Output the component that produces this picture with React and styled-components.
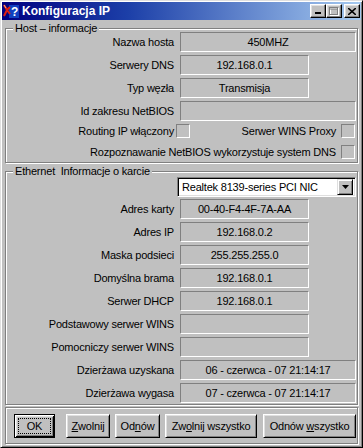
import React from 'react';
import styled, { createGlobalStyle } from 'styled-components';

const GlobalStyle = createGlobalStyle`
  html, body {
    margin: 0;
    padding: 0;
    background: #c0c0c0;
  }
  * {
    box-sizing: border-box;
  }
`;

// Outer window frame (raised)
const Window = styled.div`
  width: 363px;
  height: 448px;
  display: flex;
  flex-direction: column;
  padding: 1px;
  background: #c0c0c0;
  border: 1px solid;
  border-color: #dfdfdf #000 #000 #dfdfdf;
  box-shadow: inset 1px 1px 0 #fff, inset -1px -1px 0 #808080;
  font-family: 'Liberation Sans', Arial, sans-serif;
  font-size: 11px;
  letter-spacing: -0.2px;
  color: #000;
`;

const TitleBar = styled.div`
  height: 18px;
  flex-shrink: 0;
  display: flex;
  align-items: center;
  padding: 0 1px 0 1px;
  background: linear-gradient(90deg, #000080 0%, #1c3fa8 35%, #a6caf0 100%);
`;

const TitleIcon = styled.svg`
  flex-shrink: 0;
  margin-right: 3px;
`;

const TitleText = styled.div`
  flex: 1;
  color: #fff;
  font-weight: bold;
  font-size: 12px;
  letter-spacing: 0;
`;

const CaptionButton = styled.div`
  width: 16px;
  height: 14px;
  display: flex;
  align-items: center;
  justify-content: center;
  margin-left: ${({ $gap }) => $gap || 0}px;
  background: #c0c0c0;
  border: 1px solid;
  border-color: #fff #000 #000 #fff;
  box-shadow: inset -1px -1px 0 #808080, inset 1px 1px 0 #dfdfdf;
`;

const Body = styled.div`
  flex: 1;
  display: flex;
  flex-direction: column;
  padding: 0 3px;
`;

// Etched group box
const Group = styled.div`
  position: relative;
  display: flex;
  flex-direction: column;
  gap: 3px;
  margin-top: ${({ $mt }) => $mt}px;
  padding: ${({ $pt }) => $pt}px 1px 1px 1px;
  border: 1px solid #808080;
  box-shadow: inset 1px 1px 0 #fff, 1px 1px 0 #fff;
`;

const Legend = styled.div`
  position: absolute;
  top: -7px;
  left: 7px;
  padding: 0 2px;
  line-height: 13px;
  background: #c0c0c0;
  white-space: pre;
`;

const Row = styled.div`
  display: flex;
  align-items: center;
  height: ${({ $h }) => $h || 20}px;
  margin-top: ${({ $mt }) => $mt || 0}px;
  margin-bottom: ${({ $mb }) => $mb || 0}px;
`;

const Label = styled.div`
  width: ${({ $w }) => ($w ? `${$w}px` : 'auto')};
  flex: ${({ $w }) => ($w ? '0 0 auto' : '1')};
  text-align: right;
  white-space: nowrap;
`;

const Field = styled.div`
  width: ${({ $wide }) => ($wide ? 176 : 129)}px;
  height: 20px;
  margin-left: 6px;
  display: flex;
  align-items: center;
  justify-content: center;
  border: 1px solid;
  border-color: #808080 #fff #fff #808080;
  white-space: nowrap;
`;

const Check = styled.div`
  width: 14px;
  height: 14px;
  margin-left: ${({ $ml }) => $ml}px;
  margin-right: ${({ $mr }) => $mr || 0}px;
  border: 1px solid;
  border-color: #808080 #fff #fff #808080;
  flex-shrink: 0;
`;

const Combo = styled.div`
  width: 179px;
  height: 20px;
  margin-left: 170px;
  display: flex;
  align-items: center;
  padding: 2px;
  background: #fff;
  border: 1px solid;
  border-color: #808080 #fff #fff #808080;
  box-shadow: inset 1px 1px 0 #000, inset -1px -1px 0 #dfdfdf;
`;

const ComboText = styled.div`
  flex: 1;
  padding-left: 2px;
  white-space: nowrap;
`;

const ComboButton = styled.div`
  width: 16px;
  height: 16px;
  display: flex;
  align-items: center;
  justify-content: center;
  background: #c0c0c0;
  border: 1px solid;
  border-color: #dfdfdf #000 #000 #dfdfdf;
  box-shadow: inset 1px 1px 0 #fff, inset -1px -1px 0 #808080;
`;

const ButtonFrame = styled.div`
  display: flex;
  align-items: center;
  margin-top: 2px;
  height: 37px;
  padding: 0 0 0 8px;
  border: 1px solid #808080;
  box-shadow: inset 1px 1px 0 #fff, 1px 1px 0 #fff;
`;

const Button = styled.div`
  width: ${({ $w }) => $w}px;
  height: 24px;
  margin-left: ${({ $ml }) => $ml || 0}px;
  display: flex;
  align-items: center;
  justify-content: center;
  padding: 3px;
  background: #c0c0c0;
  border: 1px solid;
  border-color: ${({ $default }) => ($default ? '#000' : '#fff #000 #000 #fff')};
  box-shadow: ${({ $default }) =>
    $default
      ? 'inset 1px 1px 0 #fff, inset -1px -1px 0 #000, inset 2px 2px 0 #dfdfdf, inset -2px -2px 0 #808080'
      : 'inset 1px 1px 0 #dfdfdf, inset -1px -1px 0 #808080'};
  white-space: nowrap;
`;

const FocusRing = styled.span`
  flex: 1;
  align-self: stretch;
  display: flex;
  align-items: center;
  justify-content: center;
  border: 1px dotted #000;
`;

const hostRows = [
  { label: 'Nazwa hosta', value: '450MHZ', wide: true },
  { label: 'Serwery DNS', value: '192.168.0.1' },
  { label: 'Typ węzła', value: 'Transmisja' },
  { label: 'Id zakresu NetBIOS', value: '', wide: true },
];

const adapterRows = [
  { label: 'Adres karty', value: '00-40-F4-4F-7A-AA' },
  { label: 'Adres IP', value: '192.168.0.2' },
  { label: 'Maska podsieci', value: '255.255.255.0' },
  { label: 'Domyślna brama', value: '192.168.0.1' },
  { label: 'Serwer DHCP', value: '192.168.0.1' },
  { label: 'Podstawowy serwer WINS', value: '' },
  { label: 'Pomocniczy serwer WINS', value: '' },
  { label: 'Dzierżawa uzyskana', value: '06 - czerwca - 07 21:14:17', wide: true },
  { label: 'Dzierżawa wygasa', value: '07 - czerwca - 07 21:14:17', wide: true },
];

function FieldRow({ label, value, wide }) {
  return (
    <Row>
      <Label $w={167}>{label}</Label>
      <Field $wide={wide}>{value}</Field>
    </Row>
  );
}

export default function App() {
  return (
    <>
      <GlobalStyle />
      <Window>
        <TitleBar>
          <TitleIcon width="16" height="16" viewBox="0 0 16 16">
            <rect x="6" y="2" width="10" height="13" fill="#1040c0" />
            <path d="M1 2 L4 7 L1 13 M4 7 L7 4 M4 7 L7 11" stroke="#e02010" strokeWidth="2" fill="none" />
            <path d="M1 2 L3 5" stroke="#f8b080" strokeWidth="1" fill="none" />
            <text x="8" y="13" fill="#fff" fontSize="12" fontWeight="bold" fontFamily="Liberation Sans, sans-serif">?</text>
          </TitleIcon>
          <TitleText>Konfiguracja IP</TitleText>
          <CaptionButton>
            <svg width="8" height="8" viewBox="0 0 8 8">
              <rect x="1" y="5" width="6" height="2" fill="#000" />
            </svg>
          </CaptionButton>
          <CaptionButton>
            <svg width="10" height="9" viewBox="0 0 10 9">
              <rect x="1.5" y="1.5" width="8" height="7" fill="none" stroke="#fff" />
              <rect x="0.5" y="0.5" width="8" height="7" fill="none" stroke="#808080" />
              <rect x="0.5" y="1.5" width="8" height="1" fill="#808080" />
            </svg>
          </CaptionButton>
          <CaptionButton $gap={2}>
            <svg width="8" height="7" viewBox="0 0 8 7">
              <path d="M0 0 L8 7 M8 0 L0 7" stroke="#000" strokeWidth="1.6" />
            </svg>
          </CaptionButton>
        </TitleBar>

        <Body>
          <Group $mt={8} $pt={3}>
            <Legend>Host – informacje</Legend>
            {hostRows.map((r) => (
              <FieldRow key={r.label} {...r} />
            ))}
            <Row $h={18} $mt={-2}>
              <Label $w={167}>Routing IP włączony</Label>
              <Check $ml={2} />
              <Label>Serwer WINS Proxy</Label>
              <Check $ml={5} $mr={1} />
            </Row>
            <Row $h={18}>
              <Label>Rozpoznawanie NetBIOS wykorzystuje system DNS</Label>
              <Check $ml={5} $mr={1} />
            </Row>
          </Group>

          <Group $mt={8} $pt={5}>
            <Legend>Ethernet  Informacje o karcie</Legend>
            <Row $mb={-1}>
              <Combo>
                <ComboText>Realtek 8139-series PCI NIC</ComboText>
                <ComboButton>
                  <svg width="7" height="4" viewBox="0 0 7 4">
                    <path d="M0 0 H7 L3.5 4 Z" fill="#000" />
                  </svg>
                </ComboButton>
              </Combo>
            </Row>
            {adapterRows.map((r) => (
              <FieldRow key={r.label} {...r} />
            ))}
          </Group>

          <ButtonFrame>
            <Button $w={41} $default>
              <FocusRing>OK</FocusRing>
            </Button>
            <Button $w={44} $ml={11}>
              <span><u>Z</u>wolnij</span>
            </Button>
            <Button $w={45} $ml={5}>
              <span>Od<u>n</u>ów</span>
            </Button>
            <Button $w={92} $ml={5}>
              <span>Zw<u>o</u>lnij wszystko</span>
            </Button>
            <Button $w={93} $ml={6}>
              <span>Odnów <u>w</u>szystko</span>
            </Button>
          </ButtonFrame>
        </Body>
      </Window>
    </>
  );
}
